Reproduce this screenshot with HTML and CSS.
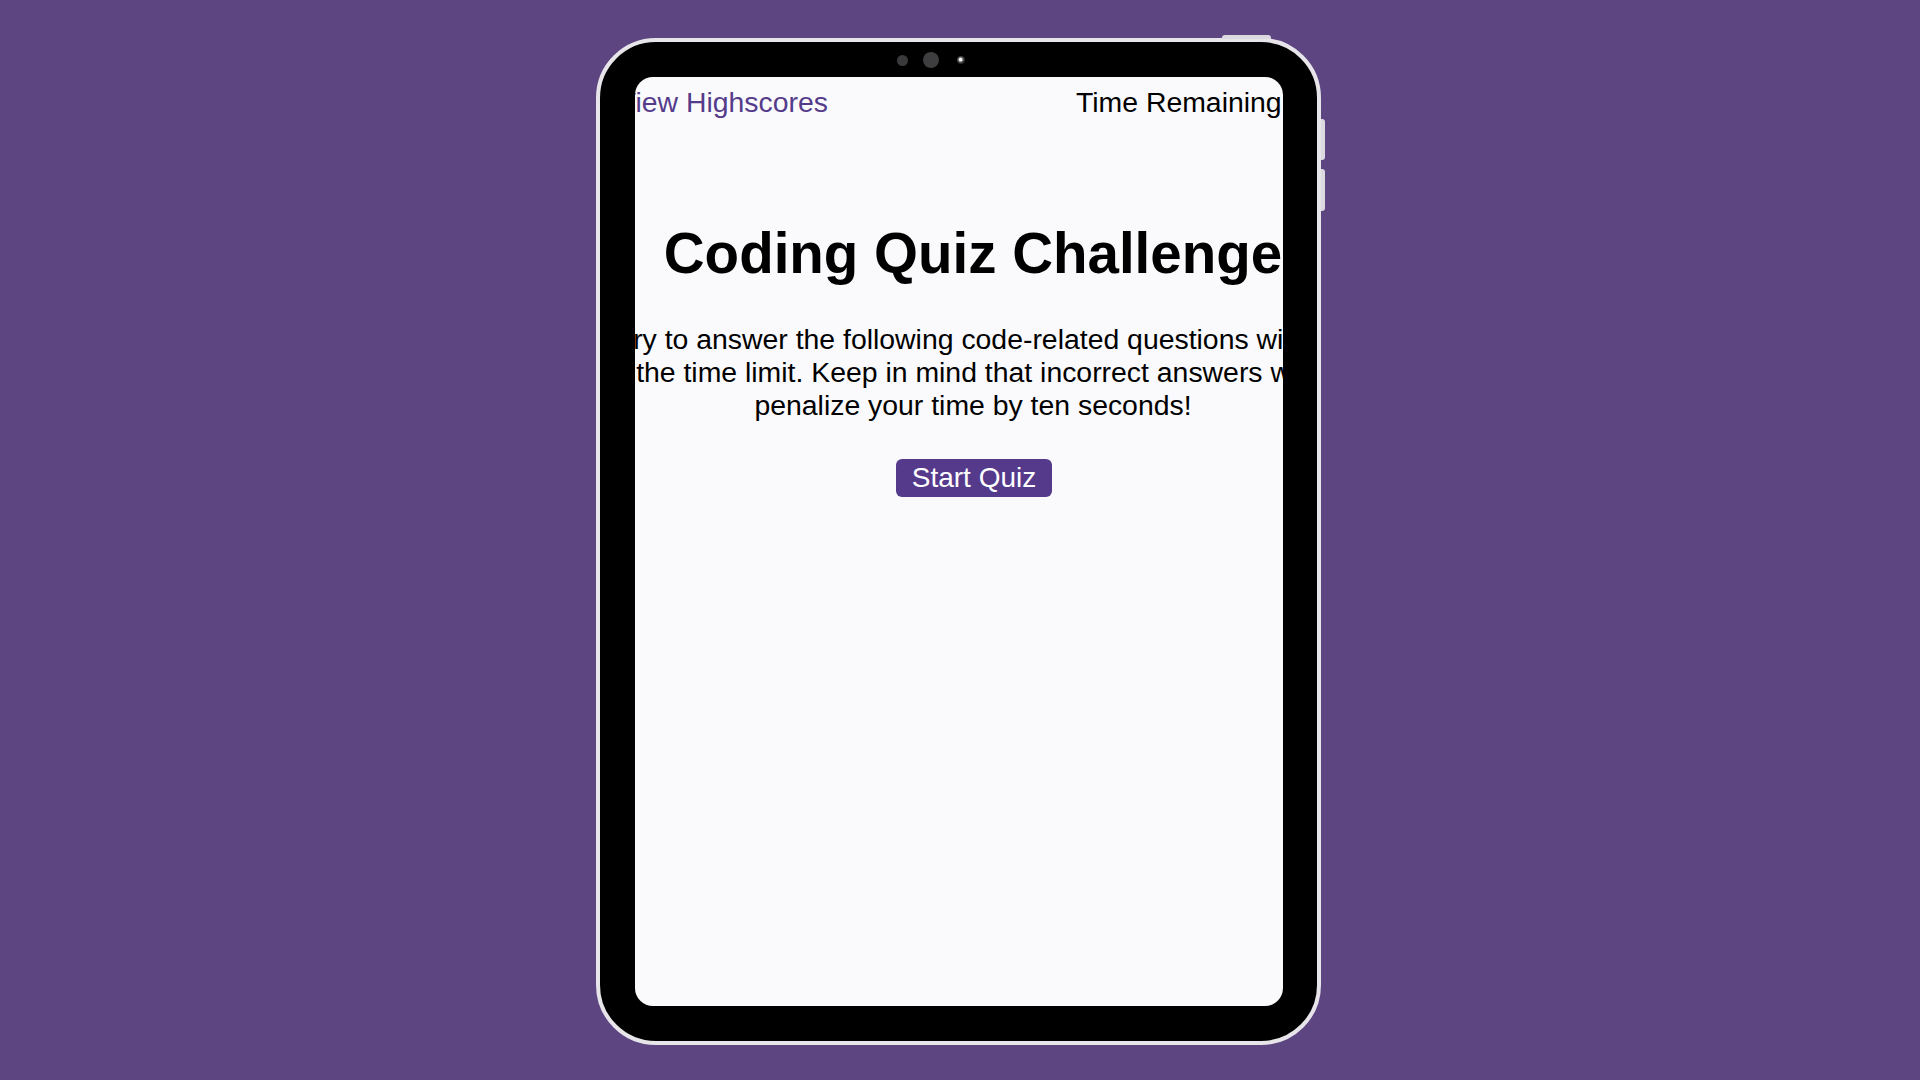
FILE: index.html
```html
<!DOCTYPE html>
<html lang="en">
<head>
<meta charset="utf-8">
<title>Coding Quiz Challenge</title>
<link rel="stylesheet" href="styles.css">
</head>
<body>
<div class="stage">
  <div class="tablet">
    <span class="btn-top"></span>
    <span class="btn-side btn-side-1"></span>
    <span class="btn-side btn-side-2"></span>
    <div class="camera">
      <span class="cam cam-a"></span>
      <span class="cam cam-b"></span>
      <span class="cam cam-c"></span>
    </div>
    <div class="screen">
      <div class="page">
        <header class="topbar">
          <a class="highscores" href="#">View Highscores</a>
          <span class="timer">Time Remaining: 75</span>
        </header>
        <h1 class="title">Coding Quiz Challenge</h1>
        <p class="intro">Try to answer the following code-related questions within the time limit. Keep in mind that incorrect answers will penalize your time by ten seconds!</p>
        <button class="start" type="button">Start Quiz</button>
      </div>
    </div>
  </div>
</div>
</body>
</html>
```

FILE: styles.css
```css
html, body {
  margin: 0;
  padding: 0;
}

body {
  background: #5c4580;
  width: 1920px;
  height: 1080px;
  overflow: hidden;
  font-family: "Liberation Sans", Arial, sans-serif;
}

.stage {
  width: 1920px;
  height: 1080px;
  display: flex;
  align-items: center;
  justify-content: center;
}

.tablet {
  position: relative;
  box-sizing: border-box;
  width: 725px;
  height: 1007px;
  margin-left: -3px;
  margin-top: 3px;
  border: 4px solid #e7e5ea;
  border-radius: 60px;
  background: #000;
  padding: 35px 34px 35px 35px;
  display: flex;
}

.btn-top {
  position: absolute;
  top: -7px;
  left: 622px;
  width: 49px;
  height: 4px;
  border-radius: 3px 3px 0 0;
  background: #dcdae0;
}

.btn-side {
  position: absolute;
  right: -8px;
  width: 4px;
  border-radius: 0 3px 3px 0;
  background: #dcdae0;
}

.btn-side-1 {
  top: 77px;
  height: 41px;
}

.btn-side-2 {
  top: 127px;
  height: 42px;
}

.camera {
  position: absolute;
  top: 9px;
  left: 297px;
  display: flex;
  align-items: center;
  height: 18px;
}

.cam {
  display: block;
  border-radius: 50%;
}

.cam-a {
  width: 11px;
  height: 11px;
  background: #3a3a3c;
}

.cam-b {
  width: 16px;
  height: 16px;
  margin-left: 15px;
  background: #3e3e40;
}

.cam-c {
  width: 8px;
  height: 8px;
  margin-left: 18px;
  background: radial-gradient(circle at 45% 45%, #f2f2f2 0 22%, #555 40%, #1a1a1a 75%);
}

.screen {
  flex: 1;
  background: #fafafc;
  border-radius: 18px;
  overflow: hidden;
  display: flex;
}

.page {
  flex: none;
  width: 744px;
  margin-left: -34px;
  display: flex;
  flex-direction: column;
  align-items: center;
  color: #000;
}

.topbar {
  align-self: stretch;
  display: flex;
  justify-content: space-between;
  padding: 9px 16px 0;
  font-size: 28.4px;
  line-height: normal;
}

.highscores {
  color: #553c8b;
  text-decoration: none;
}

.timer {
  color: #000;
}

.title {
  margin: 102px 0 0;
  font-size: 56.5px;
  font-weight: bold;
  line-height: normal;
  text-align: center;
  white-space: nowrap;
}

.intro {
  width: 724px;
  margin: 37px 0 0;
  font-size: 28.4px;
  line-height: normal;
  text-align: center;
}

.start {
  margin: 37px 0 0 2px;
  padding: 3px 16px;
  border: none;
  border-radius: 6px;
  background: #553a8c;
  color: #fff;
  font-family: "Liberation Sans", Arial, sans-serif;
  font-size: 28px;
  line-height: normal;
  cursor: pointer;
}
```
